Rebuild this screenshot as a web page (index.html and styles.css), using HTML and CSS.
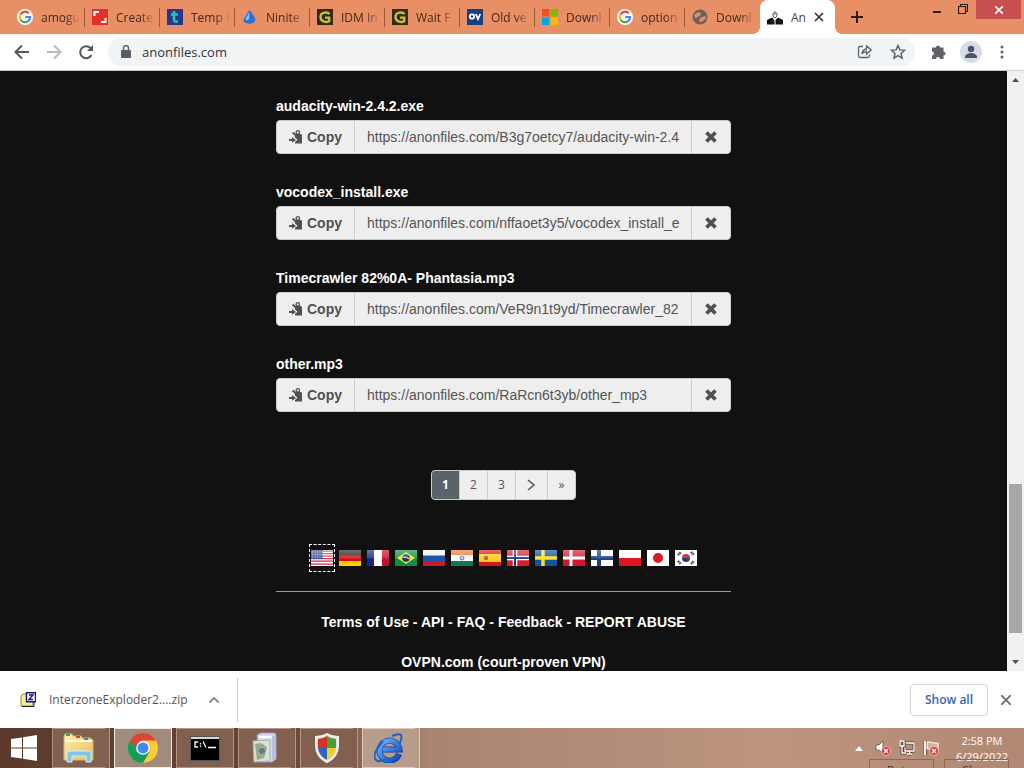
FILE: index.html
```html
<!DOCTYPE html>
<html lang="en">
<head>
<meta charset="utf-8">
<title>Anonfiles</title>
<link rel="stylesheet" href="styles.css">
</head>
<body>
<svg class="defs" aria-hidden="true">
  <defs>
    <symbol id="google" viewBox="0 0 16 16"><circle cx="8" cy="8" r="8" fill="#fff"/><g fill="none" stroke-width="2.1"><path d="M11.9 4.3A5.2 5.2 0 0 0 3.4 5.6" stroke="#ea4335"/><path d="M3.4 5.6a5.2 5.2 0 0 0 0 4.8" stroke="#fbbc05"/><path d="M3.4 10.4a5.2 5.2 0 0 0 7.9 1.7" stroke="#34a853"/><path d="M11.3 12.1A5.2 5.2 0 0 0 13 8H8.3" stroke="#4285f4"/></g></symbol>
    <symbol id="gbox" viewBox="0 0 16 16"><path fill="#302a16" d="M0 0h16v16H0z"/><path d="M12.500 5.200C10.800 2.600 3.500 2.600 3.500 8s6.700 5.600 8.700 4V8.600H8" fill="none" stroke="#c9bd35" stroke-width="2.400"/></symbol>
    <symbol id="xmark" viewBox="0 0 14 14"><path d="M2.500 2.500l9 9M11.500 2.500l-9 9" fill="none" stroke="currentColor" stroke-width="3.800"/></symbol>
    <symbol id="paste" viewBox="0 0 14 14"><path fill="currentColor" d="M5.500 5.200L3 3.500 4.200 1.800 6.800 4h5L13 5v8.500H6V12l2.500-2.200L6 7.500z"/><circle cx="8.800" cy="2.400" r="1.700" fill="none" stroke="currentColor" stroke-width="1.300"/><path fill="currentColor" d="M0 9h3V7l4 2.900-4 2.800v-1.800H0z"/></symbol>
    <linearGradient id="shine" x2="0" y2="1"><stop stop-color="#fff" stop-opacity=".35"/><stop offset=".5" stop-color="#fff" stop-opacity=".15"/><stop offset=".55" stop-color="#fff" stop-opacity="0"/></linearGradient>
    <linearGradient id="folder" x2="1" y2="1"><stop stop-color="#fff2b4"/><stop offset="1" stop-color="#e5bd57"/></linearGradient>
    <linearGradient id="blue" x2="1" y2="1"><stop stop-color="#68b8ff"/><stop offset="1" stop-color="#0c45b8"/></linearGradient>
  </defs>
</svg>

<header class="tabstrip">
  <nav class="tabs" aria-label="Tabs">
    <button class="tab"><svg class="fav"><use href="#google"/></svg><span>amogus</span></button>
    <button class="tab"><svg class="fav" viewBox="0 0 16 16"><path fill="#e5302a" d="M0 0h16v16H0z"/><path d="M2.500 7V3H7M13.500 9v4H9" fill="none" stroke="#fff" stroke-width="2"/></svg><span>Create</span></button>
    <button class="tab"><svg class="fav" viewBox="0 0 16 16"><path fill="#26388e" d="M0 0h16v16H0z"/><path d="M7 2v9q0 2 4 1.500M4 5.500h7" fill="none" stroke="#24c5a8" stroke-width="2.600"/></svg><span>Temp M</span></button>
    <button class="tab"><svg class="fav" viewBox="0 0 16 16"><path fill="#2d6fd8" d="M7 1c3 2 6 7 6.500 10-1 4.500-9.500 5-12 1C2 8 5 6 7 1z"/><path fill="#8dc0ff" d="M7 3c-1 4-4 6-3 8 3 1 4-2 3-8z"/></svg><span>Ninite</span></button>
    <button class="tab"><svg class="fav"><use href="#gbox"/></svg><span>IDM In</span></button>
    <button class="tab"><svg class="fav"><use href="#gbox"/></svg><span>Wait F</span></button>
    <button class="tab"><svg class="fav" viewBox="0 0 16 16"><path fill="#143f83" d="M0 0h16v16H0z"/><circle cx="5" cy="7.500" r="2.200" fill="none" stroke="#fff" stroke-width="1.800"/><path d="M8.800 5l2.200 5 2.200-5" fill="none" stroke="#fff" stroke-width="1.800"/></svg><span>Old ve</span></button>
    <button class="tab"><svg class="fav" viewBox="0 0 16 16"><path fill="#f25022" d="M0 0h7.500v7.500H0z"/><path fill="#7fba00" d="M8.500 0H16v7.500H8.500z"/><path fill="#00a4ef" d="M0 8.500h7.500V16H0z"/><path fill="#ffb900" d="M8.500 8.500H16V16H8.500z"/></svg><span>Downl</span></button>
    <button class="tab"><svg class="fav"><use href="#google"/></svg><span>option</span></button>
    <button class="tab last"><svg class="fav" viewBox="0 0 16 16"><circle cx="8" cy="8" r="7.500" fill="#6b6259"/><path d="M2 6l4-3 3 1-1 3-3 1-1 2zM8 9l5-2 1 2-4 4-3-1z" fill="#e0906c"/></svg><span>Downl</span></button>
    <button class="tab active"><svg class="fav" viewBox="0 0 16 16"><path d="M0 15.500V11l5-2.500 3 3 3-3 5 2.500v4.500z" fill="#111"/><path d="M5 5h6M6.500 4.500l1.500-2 1.500 2M6 6l1 2.500h2L10 6" fill="none" stroke="#555"/><path d="M8 11v5" stroke="#fff"/></svg><span>An</span><svg class="tab-x" viewBox="0 0 10 10"><path d="M1 1l8 8M9 1L1 9" stroke="#333" stroke-width="1.700"/></svg></button>
  </nav>
  <button class="newtab" aria-label="New tab"><svg width="12" height="12"><path d="M6 0v12M0 6h12" stroke="#2e1d16" stroke-width="2"/></svg></button>
  <div class="winctl">
    <button aria-label="Minimize"><svg width="10" height="18"><path d="M1 12h8" stroke="#2e1d16" stroke-width="2"/></svg></button>
    <button aria-label="Restore"><svg width="10" height="18" fill="none" stroke="#2e1d16"><path d="M.5 6.500h7v7h-7zM2.500 6V4.500h7v7H8" stroke-width="1.200"/></svg></button>
    <button class="close" aria-label="Close"><svg width="8" height="8"><path d="M0 0l8 8M8 0L0 8" stroke="#fff" stroke-width="1.600"/></svg></button>
  </div>
</header>

<div class="toolbar">
  <button aria-label="Back"><svg width="16" height="16" fill="none" stroke="#55585c" stroke-width="2"><path d="M15 8H2M8 1.500L1.500 8 8 14.500"/></svg></button>
  <button aria-label="Forward"><svg width="16" height="16" fill="none" stroke="#b8babd" stroke-width="2"><path d="M1 8h13M8 1.500L14.500 8 8 14.500"/></svg></button>
  <button aria-label="Reload"><svg width="16" height="16" fill="none" stroke="#55585c" stroke-width="2"><path d="M13.500 11A6 6 0 1 1 12.500 4L14 5.500"/><path d="M15 1v6H9z" fill="#55585c" stroke="none"/></svg></button>
  <div class="omnibox">
    <svg width="10" height="14" viewBox="0 0 10 14"><path d="M1 5h8q1 0 1 1v6q0 1-1 1H1q-1 0-1-1V6q0-1 1-1z" fill="#5a5d61"/><path d="M2.500 5V3a2.500 2.500 0 0 1 5 0v2" fill="none" stroke="#5a5d61" stroke-width="1.400"/></svg>
    <input aria-label="Address" value="anonfiles.com">
    <button aria-label="Share"><svg width="16" height="16" fill="none" stroke="#5f6368" stroke-width="1.300"><path d="M7 2.500H4Q2.500 2.500 2.500 4v8q0 1.500 1.500 1.500h8q1.500 0 1.500-1.500v-1.500"/><path d="M10.500 5V2l4.700 4-4.700 4V7.500Q7.500 7.500 6 10q.3-4.500 4.500-5z"/></svg></button>
    <button aria-label="Bookmark"><svg width="16" height="16" fill="none" stroke="#5f6368" stroke-width="1.500"><path d="M8 1.500l1.900 4.400 4.700.4-3.600 3.100 1.100 4.700L8 11.600l-4.100 2.500L5 9.400 1.400 6.300l4.700-.4z"/></svg></button>
  </div>
  <button class="ext" aria-label="Extensions"><svg width="16" height="16"><path fill="#5f6368" d="M1 3.500h4a2 2 0 1 1 4 0h3.500V7.500a2 2 0 1 1 0 4V15H9a2 2 0 0 0-4 0H1v-3.500a2 2 0 0 0 0-4z"/></svg></button>
  <button aria-label="Profile"><svg width="22" height="22"><circle cx="11" cy="11" r="11" fill="#d8dce6"/><circle cx="11" cy="8" r="3.200" fill="#4b5569"/><path fill="#4b5569" d="M5 17v-2q2-3 6-3t6 3v2z"/></svg></button>
  <button aria-label="Menu"><svg width="4" height="14" fill="#5f6368"><circle cx="2" cy="2" r="1.500"/><circle cx="2" cy="7" r="1.500"/><circle cx="2" cy="12" r="1.500"/></svg></button>
</div>

<div class="viewport">
  <main class="page">
    <div class="column">
      <section class="file">
        <label for="f1">audacity-win-2.4.2.exe</label>
        <div class="group"><button class="copy"><svg class="ico"><use href="#paste"/></svg>Copy</button><input id="f1" readonly value="https://anonfiles.com/B3g7oetcy7/audacity-win-2.4"><button class="remove" aria-label="Remove"><svg class="ico"><use href="#xmark"/></svg></button></div>
      </section>
      <section class="file">
        <label for="f2">vocodex_install.exe</label>
        <div class="group"><button class="copy"><svg class="ico"><use href="#paste"/></svg>Copy</button><input id="f2" readonly value="https://anonfiles.com/nffaoet3y5/vocodex_install_e"><button class="remove" aria-label="Remove"><svg class="ico"><use href="#xmark"/></svg></button></div>
      </section>
      <section class="file">
        <label for="f3">Timecrawler 82%0A- Phantasia.mp3</label>
        <div class="group"><button class="copy"><svg class="ico"><use href="#paste"/></svg>Copy</button><input id="f3" readonly value="https://anonfiles.com/VeR9n1t9yd/Timecrawler_82"><button class="remove" aria-label="Remove"><svg class="ico"><use href="#xmark"/></svg></button></div>
      </section>
      <section class="file">
        <label for="f4">other.mp3</label>
        <div class="group"><button class="copy"><svg class="ico"><use href="#paste"/></svg>Copy</button><input id="f4" readonly value="https://anonfiles.com/RaRcn6t3yb/other_mp3"><button class="remove" aria-label="Remove"><svg class="ico"><use href="#xmark"/></svg></button></div>
      </section>

      <nav class="pages" aria-label="Pages">
        <a class="current" href="#1">1</a><a href="#2">2</a><a href="#3">3</a><a class="wide" href="#next" aria-label="Next"><svg width="9" height="12"><path d="M1 1l6 5-6 5" fill="none" stroke="#555" stroke-width="1.600"/></svg></a><a href="#last">»</a>
      </nav>

      <nav class="flags" aria-label="Languages">
        <a class="selected" href="#us" aria-label="English"><svg viewBox="0 0 22 16"><path fill="#fff" d="M0 0h22v16H0z"/><path d="M0 1.200h22M0 3.700h22M0 6.200h22M0 8.700h22M0 11.200h22M0 14.200h22" stroke="#d42a48" stroke-width="1.300"/><path fill="#3d4a94" d="M0 0h12v9H0z"/><path d="M1 2h11M1 4.500h11M1 7h11" stroke="#c9cde8" stroke-dasharray="1 1.500"/><path fill="url(#shine)" d="M0 0h22v16H0z"/></svg></a>
        <a href="#de" aria-label="Deutsch"><svg viewBox="0 0 22 16"><path fill="#262321" d="M0 0h22v6H0z"/><path fill="#d80d12" d="M0 5.500h22V11H0z"/><path fill="#fc0" d="M0 11h22v5H0z"/><path fill="url(#shine)" d="M0 0h22v16H0z"/></svg></a>
        <a href="#fr" aria-label="Français"><svg viewBox="0 0 22 16"><path fill="#fff" d="M0 0h22v16H0z"/><path fill="#17267e" d="M0 0h7v16H0z"/><path fill="#c80e2b" d="M15 0h7v16h-7z"/><path fill="url(#shine)" d="M0 0h22v16H0z"/></svg></a>
        <a href="#br" aria-label="Português"><svg viewBox="0 0 22 16"><path fill="#079047" d="M0 0h22v16H0z"/><path fill="#f7e11b" d="M11 2l9 6-9 6-9-6z"/><circle cx="11" cy="8" r="3.800" fill="#1b3474"/><path d="M7.500 7q4-.5 7 2" stroke="#fff" fill="none"/><path fill="url(#shine)" d="M0 0h22v16H0z"/></svg></a>
        <a href="#ru" aria-label="Русский"><svg viewBox="0 0 22 16"><path fill="#f5f5f5" d="M0 0h22v6H0z"/><path fill="#1b56ac" d="M0 5.500h22V11H0z"/><path fill="#cc1c2a" d="M0 11h22v5H0z"/></svg></a>
        <a href="#in" aria-label="हिन्दी"><svg viewBox="0 0 22 16"><path fill="#ee7a35" d="M0 0h22v6H0z"/><path fill="#f8f8f8" d="M0 5h22v6H0z"/><path fill="#0c7c4f" d="M0 11h22v5H0z"/><circle cx="11" cy="8" r="2" fill="#c6c8e8" stroke="#69709e"/><path fill="url(#shine)" d="M0 0h22v16H0z"/></svg></a>
        <a href="#es" aria-label="Español"><svg viewBox="0 0 22 16"><path fill="#d7131d" d="M0 0h22v16H0z"/><path fill="#fdcd13" d="M0 4h22v8H0z"/><path fill="#b35a2c" d="M5 6h4v3l-2 1.500L5 9z"/><path fill="url(#shine)" d="M0 0h22v16H0z"/></svg></a>
        <a href="#no" aria-label="Norsk"><svg viewBox="0 0 22 16"><path fill="#d81e32" d="M0 0h22v16H0z"/><path d="M8 0v16M0 8h22" stroke="#fff" stroke-width="4.500"/><path d="M8 0v16M0 8h22" stroke="#173678" stroke-width="2"/><path fill="url(#shine)" d="M0 0h22v16H0z"/></svg></a>
        <a href="#se" aria-label="Svenska"><svg viewBox="0 0 22 16"><path fill="#0d559e" d="M0 0h22v16H0z"/><path d="M8 0v16M0 8h22" stroke="#ffe018" stroke-width="3.500"/><path fill="url(#shine)" d="M0 0h22v16H0z"/></svg></a>
        <a href="#dk" aria-label="Dansk"><svg viewBox="0 0 22 16"><path fill="#d2162f" d="M0 0h22v16H0z"/><path d="M8 0v16M0 8h22" stroke="#fff" stroke-width="3"/><path fill="url(#shine)" d="M0 0h22v16H0z"/></svg></a>
        <a href="#fi" aria-label="Suomi"><svg viewBox="0 0 22 16"><path fill="#fff" d="M0 0h22v16H0z"/><path d="M8 0v16M0 8h22" stroke="#203d7b" stroke-width="4"/><path fill="url(#shine)" d="M0 0h22v16H0z"/></svg></a>
        <a href="#pl" aria-label="Polski"><svg viewBox="0 0 22 16"><path fill="#fff" d="M0 0h22v16H0z"/><path fill="#df1622" d="M0 8h22v8H0z"/></svg></a>
        <a href="#jp" aria-label="日本語"><svg viewBox="0 0 22 16"><path fill="#fff" d="M0 0h22v16H0z"/><circle cx="11" cy="8" r="5" fill="#df1821"/></svg></a>
        <a href="#kr" aria-label="한국어"><svg viewBox="0 0 22 16"><path fill="#fff" d="M0 0h22v16H0z"/><path fill="#d33748" d="M7 8a4 4 0 0 1 8 0z"/><path fill="#263e77" d="M7 8a4 4 0 0 0 8 0z"/><path d="M3 5l3-3M16 2l3 3M3 11l3 3M16 14l3-3" stroke="#444" stroke-width="2.400" stroke-dasharray="1.600 .5"/></svg></a>
      </nav>

      <footer class="foot">
        <p><a href="#terms">Terms of Use</a> - <a href="#api">API</a> - <a href="#faq">FAQ</a> - <a href="#feedback">Feedback</a> - <a href="#abuse">REPORT ABUSE</a></p>
        <p><a href="#ovpn">OVPN.com (court-proven VPN)</a></p>
      </footer>
    </div>
  </main>
  <div class="scroll">
    <svg width="7" height="4"><path d="M0 4l3.500-4L7 4z" fill="#505050"/></svg>
    <div class="track"><div class="thumb"></div></div>
    <svg width="7" height="4"><path d="M0 0l3.500 4L7 0z" fill="#505050"/></svg>
  </div>
</div>

<div class="downloads">
  <button class="item"><svg width="16" height="16"><path d="M1 4l2-2h4v2h6v10H1z" fill="#f6f08a" stroke="#8c8840"/><path d="M2 14.500h12V9" stroke="#222" fill="none"/><path d="M6.500.7h9v9h-9z" fill="#fff" stroke="#15158c" stroke-width="1.400"/><path d="M9 3h4L9 7.500h4" fill="none" stroke="#15158c" stroke-width="1.400"/></svg><span>InterzoneExploder2....zip</span><svg class="chev" width="10" height="6"><path d="M.5 5.500L5 1l4.500 4.500" fill="none" stroke="#777" stroke-width="1.600"/></svg></button>
  <button class="showall">Show all</button>
  <button class="dismiss" aria-label="Close downloads bar"><svg width="10" height="10"><path d="M0 0l10 10M10 0L0 10" stroke="#6c6c6c" stroke-width="1.800"/></svg></button>
</div>

<footer class="taskbar">
  <button class="start" aria-label="Start"><svg width="26" height="26"><path fill="#fff" d="M0 4l11-1.500V12.500H0zM12 2.300L26 0v12.500H12zM0 13.500h11v10L0 22zM12 13.500h14V26l-14-2.300z"/></svg></button>
  <button class="app stack" aria-label="File Explorer"><svg width="32" height="30"><path d="M1 4l1-3h7l1 2h8l1 2h8l3 2v20H1z" fill="url(#folder)" stroke="#d8b765"/><path d="M3 2h4" stroke="#47a15a" stroke-width="2"/><path d="M13 4h4" stroke="#c94d34" stroke-width="2"/><path d="M21 6h4" stroke="#4a7bc8" stroke-width="2"/><path d="M2 8h27" stroke="#fff7cf" stroke-width="2"/><path d="M4 29V20q0-2 2-2h20q2 0 2 2v9h-5v-6H9v6z" fill="#82c5e8" stroke="#d0efff"/></svg></button>
  <button class="app lit" aria-label="Chrome"><svg width="30" height="30" viewBox="0 0 30 30"><circle cx="15" cy="15" r="15" fill="#fdc936"/><path d="M2 7.500A15 15 0 0 0 15 30l6.500-11.200L15 15 8.500 18.800z" fill="#119c58"/><path d="M2 7.500l6.500 11.300L12 9z" fill="#119c58"/><path d="M2 7.500A15 15 0 0 1 28 7.500H15Q9 8 8 14z" fill="#dc4437"/><circle cx="15" cy="15" r="6.800" fill="#fff"/><circle cx="15" cy="15" r="5.500" fill="#4387f4"/></svg></button>
  <button class="app" aria-label="Command Prompt"><svg width="30" height="25"><path fill="#000" stroke="#555" d="M.5.5h29v24H.5z"/><path fill="#d7d7d7" d="M1 1h28v2H1z"/><path d="M8 6H5v5h3M10.500 7v1.500M10.500 9.500V11M13 5.500l3 6M18 11.500h8" stroke="#fff" stroke-width="1.300" fill="none"/></svg></button>
  <button class="app stack" aria-label="Documents"><svg width="26" height="32"><path fill="#d7d9ef" stroke="#9b9ebf" d="M5 3l4-2h14l1 3v23l-4 3H7z"/><path fill="#b8bce1" d="M20 5l4-3v25l-4 3z"/><path d="M7 5h13" stroke="#fff" stroke-width="2"/><path fill="#d8e1d6" stroke="#a6b5a6" d="M1 9l17-1v21L2 30z"/><path d="M3 12l6-1 6 4-3 11-7 2z" fill="#8fac91"/><path d="M8 14l5 2-2 10-5-5z" fill="#c5a776"/><circle cx="10" cy="19" r="3" fill="#597c97"/></svg></button>
  <button class="app stack" aria-label="Security"><svg width="26" height="30" viewBox="0 0 26 30"><path d="M13 1q5 3 11 3v9c0 8-5 13-11 16C7 26 2 21 2 13V4q6 0 11-3z" fill="#ddd" stroke="#eee" stroke-width="2"/><path fill="#d33225" d="M13 3v12H4V6q5 0 9-3z"/><path fill="#4c9f37" d="M13 3v12h9V6q-5 0-9-3z"/><path fill="#2c66bd" d="M13 15v12Q5 23 4 15z"/><path fill="#f2cd32" d="M13 15v12Q21 23 22 15z"/></svg></button>
  <button class="app light stack" aria-label="Internet Explorer"><svg width="30" height="30" viewBox="0 0 30 30" fill="none"><path d="M25 21A10 10 0 1 1 25.500 16.500H9" stroke="#0c3f9f" stroke-width="6"/><path d="M25 21A10 10 0 1 1 25.500 16.500H9" stroke="url(#blue)" stroke-width="4.600"/><path d="M18 3q9-4 9.500 1 0 3-2 7M9 8Q-3 22 2 27q3 3 10-1" stroke="#2360c4" stroke-width="2"/></svg></button>
  <div class="ghost" aria-hidden="true"><span>Retry</span><span>Close</span></div>
  <div class="tray">
    <svg width="8" height="5"><path d="M0 5l4-5 4 5z" fill="#fff"/></svg>
    <svg class="sp" width="16" height="16"><path d="M1 5h3l4-4v13l-4-4H1z" fill="#fff" stroke="#5c4335" stroke-width=".7"/><circle cx="11" cy="11" r="4.500" fill="#d63c40" stroke="#f4b4b0"/><path d="M9 9l4 4M13 9l-4 4" stroke="#fff" stroke-width="1.400"/></svg>
    <svg width="16" height="16" fill="none"><path d="M7 3h8v8H6V8M8 14h5M10.500 11v3M1 1h4v5H1zM3 6v7h4" stroke="#5c4335" stroke-width="3"/><path d="M7 3h8v8H6V8M8 14h5M10.500 11v3M1 1h4v5H1zM3 6v7h4" stroke="#fff" stroke-width="1.300"/></svg>
    <svg width="16" height="16"><path d="M1 1v14M3.500 1v14" stroke="#5c4335" stroke-width=".8"/><path d="M2 1v14" stroke="#fff" stroke-width="1.800"/><path d="M4 2h4l2 1h5v7H9L7 9H4z" fill="#d8b2a2" stroke="#fff"/><circle cx="11" cy="11" r="4.500" fill="#d63c40" stroke="#f4b4b0"/><path d="M9 9l4 4M13 9l-4 4" stroke="#fff" stroke-width="1.400"/></svg>
    <time class="clock">2:58 PM<br>6/29/2022</time>
  </div>
</footer>
</body>
</html>
```

FILE: styles.css
```css
* { box-sizing: border-box; }

body {
  margin: 0;
  height: 100vh;
  display: flex;
  flex-direction: column;
  overflow: hidden;
  font-family: "Open Sans", "Noto Sans", sans-serif;
  font-size: 12px;
  background: #fff;
}

button { border: 0; padding: 0; background: none; font: inherit; color: inherit; }
a { color: inherit; text-decoration: none; }
svg { display: block; flex: none; }
.defs { position: absolute; width: 0; height: 0; }

/* Tab strip */
.tabstrip { display: flex; height: 34px; flex: none; background: #e98f66; color: #44281c; }
.tabs { display: flex; padding-left: 10px; }
.tab {
  position: relative;
  display: flex;
  align-items: center;
  gap: 8px;
  width: 75px;
  padding: 0 4px 0 7px;
}
.tab::after { content: ""; position: absolute; right: 0; top: 8px; width: 1px; height: 19px; background: #9a5a3c; }
.tab.last::after { display: none; }
.fav { width: 16px; height: 16px; }
.tab span {
  flex: 1;
  overflow: hidden;
  text-align: left;
  white-space: nowrap;
  mask-image: linear-gradient(90deg, #000 60%, transparent);
}
.tab.active { padding: 0 11px 0 7px; background: #fff; border-radius: 8px 8px 0 0; color: #444; }
.tab.active span { mask-image: none; }
.tab.active::before, .tab.active::after {
  content: "";
  position: absolute;
  top: auto;
  bottom: 0;
  width: 8px;
  height: 8px;
}
.tab.active::before { left: -8px; background: radial-gradient(circle at 0 0, transparent 8px, #fff 8px); }
.tab.active::after { right: -8px; background: radial-gradient(circle at 100% 0, transparent 8px, #fff 8px); }
.tab-x { width: 10px; height: 10px; }
.newtab { width: 44px; display: grid; place-items: center; }
.winctl { margin-left: auto; margin-right: 3px; display: flex; align-items: flex-start; gap: 16px; }
.winctl .close { width: 45px; height: 19px; margin-left: -8px; background: #c75050; display: grid; place-items: center; }

/* Toolbar */
.toolbar {
  display: flex;
  align-items: center;
  gap: 16px;
  height: 37px;
  flex: none;
  padding: 0 20px 0 14px;
  border-bottom: 1px solid #ccc;
}
.omnibox {
  flex: 1;
  display: flex;
  align-items: center;
  gap: 16px;
  height: 28px;
  margin-left: -2px;
  padding: 0 9px 0 13px;
  border-radius: 14px;
  background: #f1f3f4;
}
.omnibox input {
  flex: 1;
  min-width: 0;
  margin-left: -5px;
  padding: 0;
  border: 0;
  background: none;
  font: 13px "Open Sans", sans-serif;
  color: #333;
}
.toolbar .ext { margin-right: -3px; }
.toolbar button:last-child { margin-left: 2px; }

/* Page */
.viewport { flex: 1; min-height: 0; display: flex; background: #111; }
.page {
  flex: 1;
  overflow: hidden;
  padding-top: 25px;
  font: 14px/20px "Liberation Sans", Arial, sans-serif;
  color: #fff;
}
.column { max-width: 455px; margin: 0 auto; }
.file { margin-bottom: 28px; }
.file label { display: block; margin-bottom: 4px; font-weight: bold; }
.group {
  display: flex;
  height: 34px;
  border: 1px solid #ccc;
  border-radius: 4px;
  background: #eee;
  color: #505050;
  overflow: hidden;
}
.ico { width: 14px; height: 14px; }
.copy { display: flex; align-items: center; justify-content: center; gap: 4px; width: 77px; font-weight: bold; }
.group input {
  flex: 1;
  min-width: 0;
  padding: 0 10px 0 12px;
  border: solid #ccc;
  border-width: 0 1px;
  background: #eee;
  font: inherit;
  color: #555;
}
.remove { display: grid; place-items: center; width: 38px; }

.pages {
  display: flex;
  width: fit-content;
  height: 30px;
  margin: 58px auto 45px;
  border: 1px solid #ccc;
  border-radius: 4px;
  overflow: hidden;
  background: #eee;
  color: #555;
  font: 12px/28px "Open Sans", sans-serif;
}
.pages a { width: 28px; text-align: center; border-left: 1px solid #ccc; }
.pages a:first-child { width: 27px; border-left: 0; }
.pages .wide { width: 32px; display: grid; place-items: center; }
.pages .current { background: #596468; color: #fff; font-weight: bold; }

.flags { display: flex; justify-content: center; align-items: center; gap: 6px; height: 26px; }
.flags svg { width: 22px; height: 16px; }
.flags .selected { outline: 1px dashed #fff; outline-offset: 1px; padding: 4px 0; }

.foot { margin-top: 20px; border-top: 1px solid #999; padding-top: 20px; text-align: center; font-weight: bold; }
.foot p { margin: 0 0 20px; }

.scroll { width: 17px; background: #f1f1f1; display: flex; flex-direction: column; align-items: center; padding: 7px 0; }
.track { flex: 1; width: 13px; display: flex; flex-direction: column; justify-content: flex-end; padding-bottom: 27px; }
.thumb { height: 27%; background: #a8a8a8; }

/* Downloads shelf */
.downloads { display: flex; align-items: center; height: 57px; flex: none; padding: 0 13px 0 0; background: #fff; }
.item {
  display: flex;
  align-items: center;
  gap: 13px;
  height: 44px;
  width: 238px;
  padding-left: 20px;
  border-right: 1px solid #ccc;
  color: #555;
}
.item span { width: 140px; white-space: nowrap; text-align: left; }
.item .chev { margin-left: 7px; }
.showall { margin-left: auto; width: 78px; height: 32px; border: 1px solid #d5d8dc; border-radius: 4px; color: #3367b0; font-weight: 600; }
.dismiss { margin-left: 13px; }

/* Taskbar */
.taskbar {
  position: relative;
  display: flex;
  height: 40px;
  flex: none;
  background: linear-gradient(90deg, #5c3a2b, #684536 28%, #a98571 42%, #bc9480 75%, #b08874);
  overflow: hidden;
}
.start { width: 52px; padding-right: 4px; display: grid; place-items: center; }
.app {
  position: relative;
  width: 58px;
  margin-right: 4px;
  border: 1px solid #b49484;
  background: #82604f;
  display: grid;
  place-items: center;
}
.app.stack { width: 54px; margin-right: 8px; }
.app.stack::after { content: ""; position: absolute; top: -1px; bottom: -1px; right: -5px; width: 4px; border-right: 1px solid #b49484; background: #82604f; }
.app.lit { border-color: #f2e8e0; background: #a18b7d; }
.app.light { border-color: #e0c8ba; background: #b79b8b; }
.app.light::after { border-color: #e0c8ba; background: #b79b8b; }
.tray { margin-left: auto; display: flex; align-items: center; gap: 8px; padding-right: 16px; }
.tray .sp { margin-left: 4px; }
.clock { margin-left: 9px; text-align: center; font-size: 11px; line-height: 16px; color: #fff; padding-top: 2px; }
.ghost { position: absolute; right: 15px; top: 31px; display: flex; gap: 10px; color: #59402f; }
.ghost span { width: 65px; height: 22px; border: 1px solid #8b6859; text-align: center; line-height: 22px; }
```
